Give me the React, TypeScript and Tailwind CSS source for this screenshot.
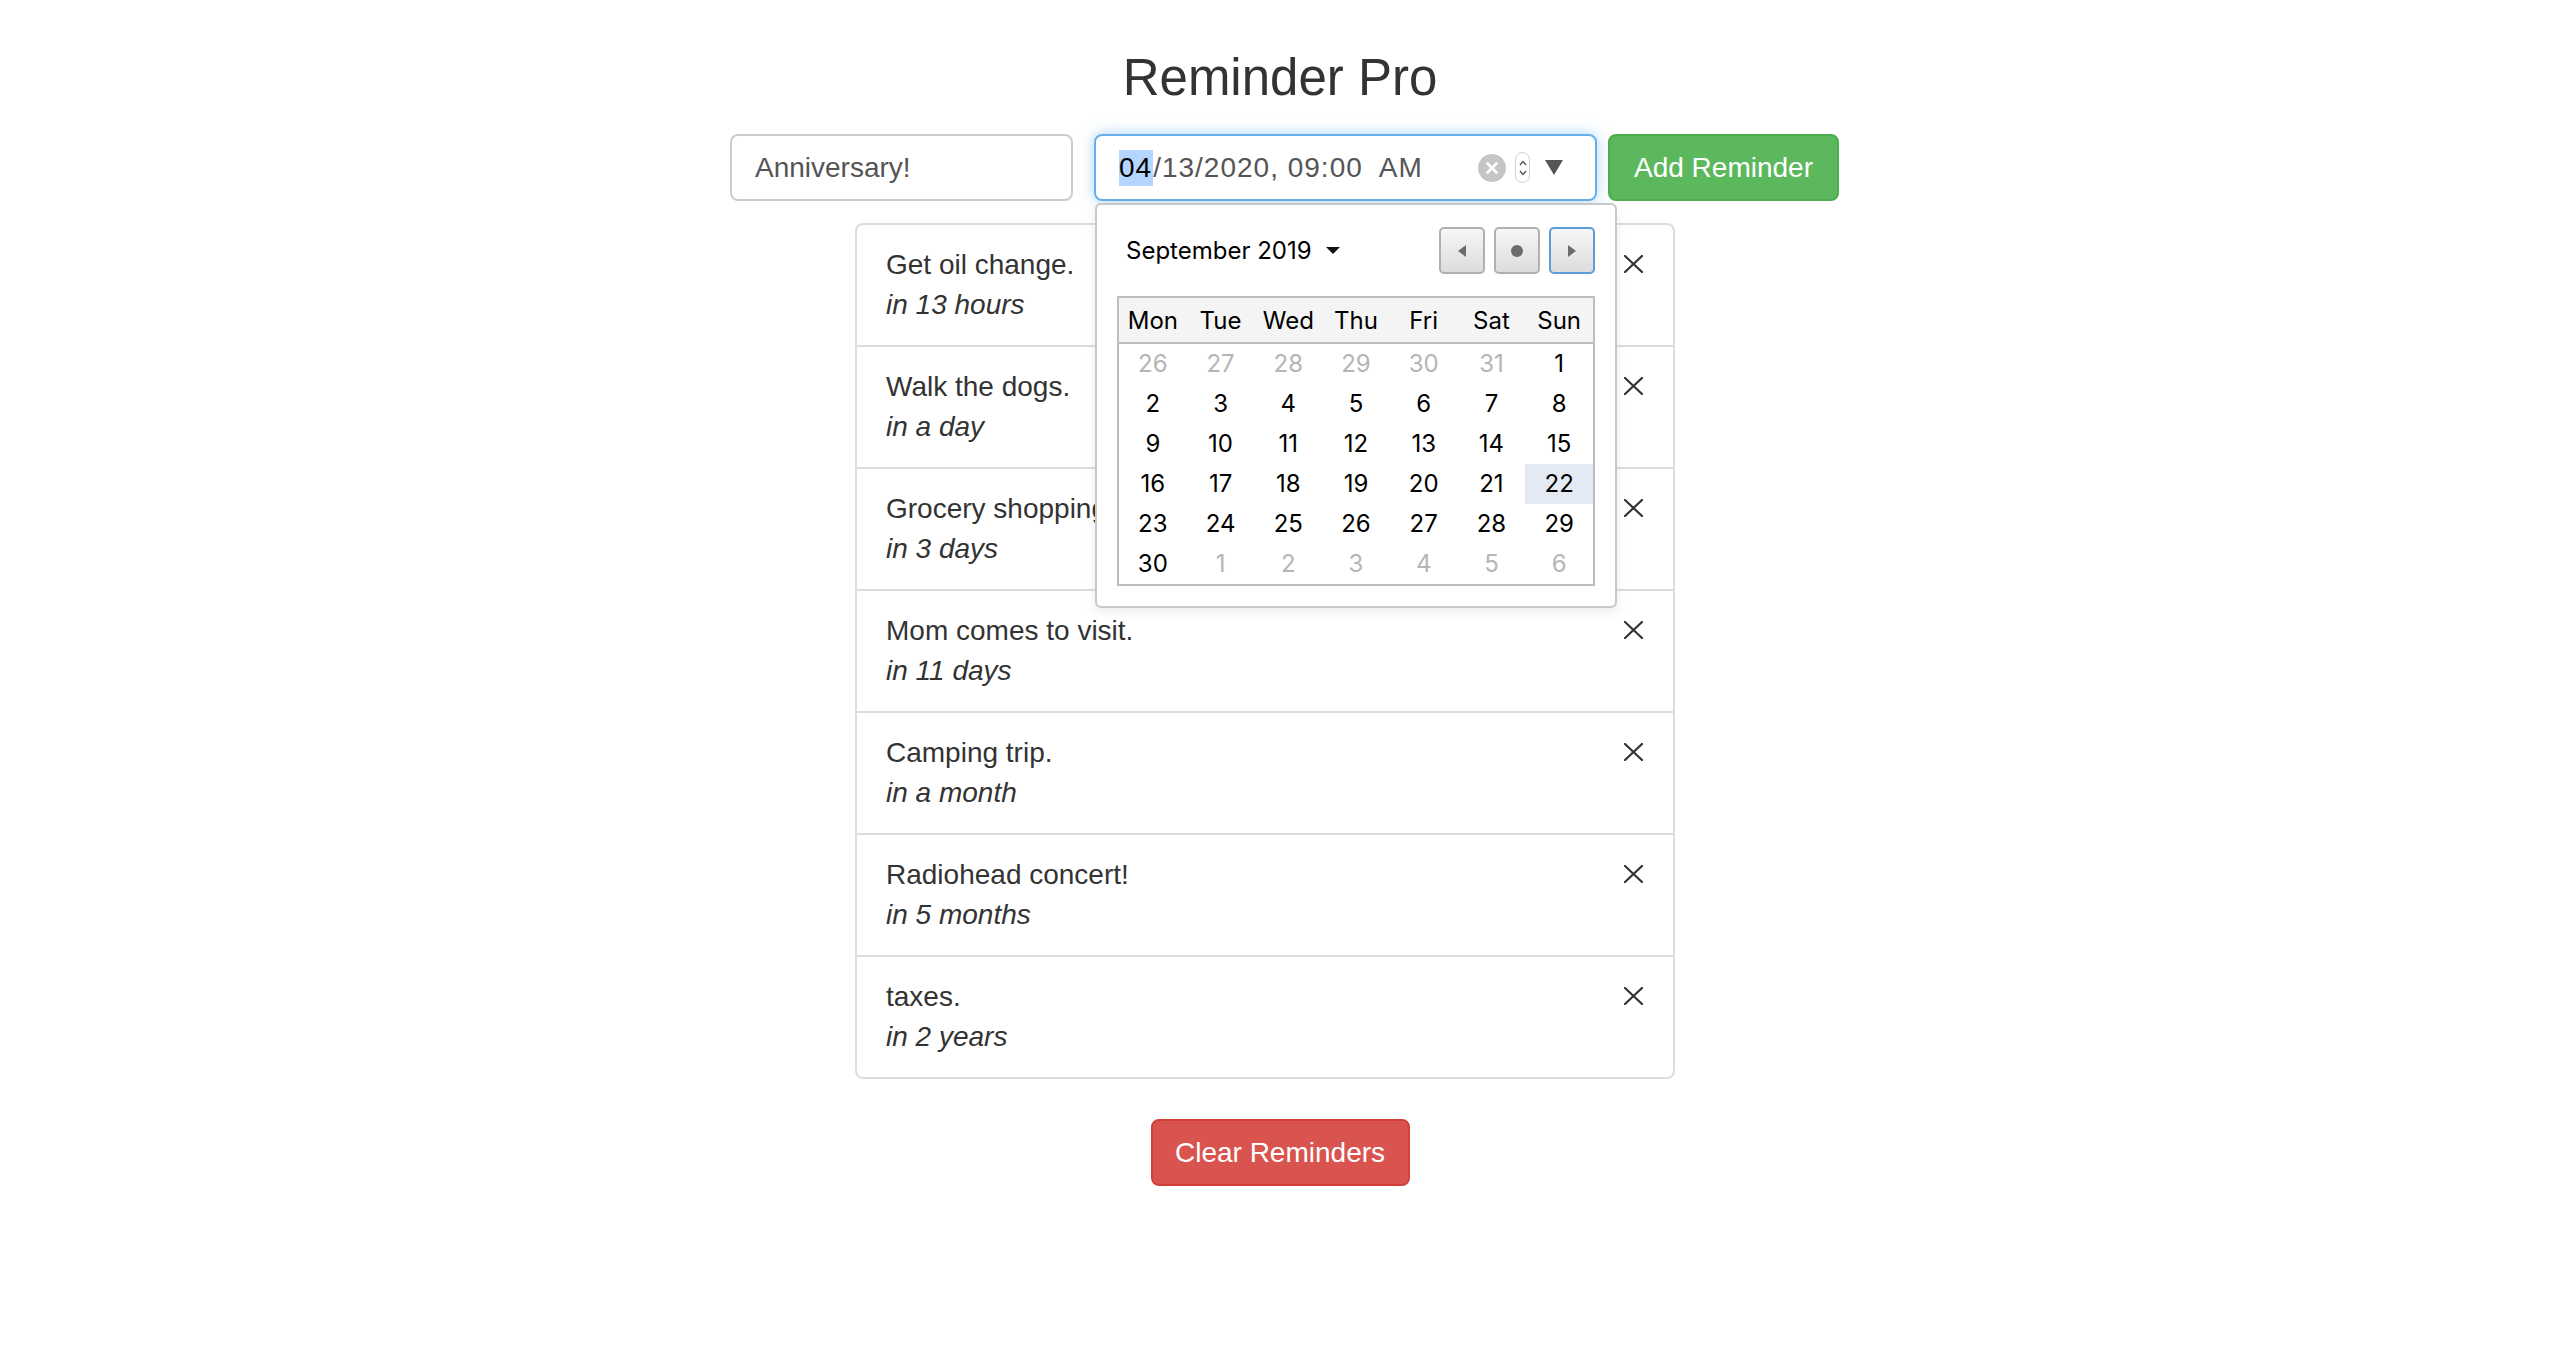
import { X } from "lucide-react";

const reminders = [
  { text: "Get oil change.", due: "in 13 hours" },
  { text: "Walk the dogs.", due: "in a day" },
  { text: "Grocery shopping.", due: "in 3 days" },
  { text: "Mom comes to visit.", due: "in 11 days" },
  { text: "Camping trip.", due: "in a month" },
  { text: "Radiohead concert!", due: "in 5 months" },
  { text: "taxes.", due: "in 2 years" },
];

const weekDays = ["Mon", "Tue", "Wed", "Thu", "Fri", "Sat", "Sun"];

// each cell: [label, isOutsideMonth]
const weeks: [number, boolean][][] = [
  [[26, true], [27, true], [28, true], [29, true], [30, true], [31, true], [1, false]],
  [[2, false], [3, false], [4, false], [5, false], [6, false], [7, false], [8, false]],
  [[9, false], [10, false], [11, false], [12, false], [13, false], [14, false], [15, false]],
  [[16, false], [17, false], [18, false], [19, false], [20, false], [21, false], [22, false]],
  [[23, false], [24, false], [25, false], [26, false], [27, false], [28, false], [29, false]],
  [[30, false], [1, true], [2, true], [3, true], [4, true], [5, true], [6, true]],
];

const CloseIcon = () => (
  <svg width="19" height="18" viewBox="0 0 19 18" className="mt-[10px] shrink-0">
    <path d="M1 1 L18 17 M18 1 L1 17" stroke="#333" strokeWidth="2.2" strokeLinecap="square" />
  </svg>
);

const NavButton = ({ kind, focused }: { kind: "prev" | "today" | "next"; focused?: boolean }) => (
  <div
    className={`flex h-[47px] w-[46px] items-center justify-center rounded-[5px] border-2 bg-gradient-to-b from-[#f7f7f7] to-[#dcdcdc] ${
      focused ? "border-[#5b9dd9]" : "border-[#b0b0b0]"
    }`}
  >
    {kind === "prev" && (
      <svg width="8" height="12" viewBox="0 0 8 12">
        <path d="M8 0 L0 6 L8 12 Z" fill="#6b6b6b" />
      </svg>
    )}
    {kind === "today" && <div className="h-[12px] w-[12px] rounded-full bg-[#6b6b6b]" />}
    {kind === "next" && (
      <svg width="8" height="12" viewBox="0 0 8 12">
        <path d="M0 0 L8 6 L0 12 Z" fill="#6b6b6b" />
      </svg>
    )}
  </div>
);

const DatePopup = () => (
  <div className="absolute left-[-1px] top-[calc(100%+4px)] z-10 w-[522px] rounded-[6px] border-2 border-[#c8c8c8] bg-white px-[20px] pb-[20px] pt-[22px] font-['Inter',sans-serif] text-black shadow-[0_4px_12px_rgba(0,0,0,0.08)]">
    <div className="flex h-[47px] items-center">
      <div className="ml-[9px] flex items-center text-[24px]">
        September 2019
        <svg width="14" height="7" viewBox="0 0 14 7" className="ml-[14px]">
          <path d="M0 0 L14 0 L7 7 Z" fill="#111" />
        </svg>
      </div>
      <div className="ml-auto flex gap-[9px]">
        <NavButton kind="prev" />
        <NavButton kind="today" />
        <NavButton kind="next" focused />
      </div>
    </div>
    <div className="mt-[22px] border-2 border-[#bdbdbd]">
      <div className="grid h-[46px] grid-cols-7 items-center border-b-2 border-[#bdbdbd] bg-[#f4f4f4] pt-[2px] text-center text-[24px]">
        {weekDays.map((d) => (
          <div key={d}>{d}</div>
        ))}
      </div>
      {weeks.map((week, wi) => (
        <div key={wi} className="grid h-[40px] grid-cols-7 text-center text-[24px]">
          {week.map(([n, out], di) => (
            <div
              key={di}
              className={`flex items-center justify-center ${out ? "text-[#b5b5b5]" : "text-black"} ${
                wi === 3 && di === 6 ? "bg-[#e4eaf4]" : ""
              }`}
            >
              {n}
            </div>
          ))}
        </div>
      ))}
    </div>
  </div>
);

export default function App() {
  return (
    <div className="min-h-screen bg-white font-['Liberation_Sans',Arial,sans-serif] text-[#333]">
      <div className="flex flex-col items-center">
        <h1 className="mt-[50px] text-[51px] font-normal leading-[56px]">Reminder Pro</h1>

        <div className="ml-[9px] mt-[28px] flex items-center">
          <div className="flex h-[67px] w-[343px] items-center rounded-[8px] border-2 border-[#ccc] px-[23px] text-[28px] text-[#555]">
            Anniversary!
          </div>

          <div className="relative ml-[21px] flex h-[67px] w-[503px] items-center rounded-[8px] border-2 border-[#66afe9] pl-[23px] pr-[32px] text-[28px] text-[#555] shadow-[0_0_14px_rgba(102,175,233,0.55)]">
            <span className="bg-[#b4d5fe] pr-[1px] leading-[36px] tracking-[1px] text-black">04</span>
            <span className="tracking-[1px]">/13/2020, 09:00&nbsp; AM</span>
            <div className="ml-auto flex items-center">
              <div className="flex h-[28px] w-[28px] items-center justify-center rounded-full bg-[#c6c6c6]">
                <X size={18} strokeWidth={3.5} color="#fff" />
              </div>
              <div className="ml-[9px] flex h-[31px] w-[15px] flex-col items-center justify-center gap-[4px] rounded-full border-[1.5px] border-[#cfcfcf]">
                <svg width="8" height="6" viewBox="0 0 8 6">
                  <path d="M1 5 L4 1.5 L7 5" stroke="#555" strokeWidth="1.4" fill="none" />
                </svg>
                <svg width="8" height="6" viewBox="0 0 8 6">
                  <path d="M1 1 L4 4.5 L7 1" stroke="#555" strokeWidth="1.4" fill="none" />
                </svg>
              </div>
              <svg width="18" height="15" viewBox="0 0 18 15" className="ml-[15px]">
                <path d="M0 0 L18 0 L9 15 Z" fill="#555" />
              </svg>
            </div>
            <DatePopup />
          </div>

          <button className="ml-[11px] h-[67px] w-[231px] rounded-[8px] border-2 border-[#4cae4c] bg-[#5cb85c] text-[28px] text-white">
            Add Reminder
          </button>
        </div>

        <ul className="mr-[30px] mt-[22px] w-[820px]">
          {reminders.map((r, i) => (
            <li
              key={i}
              className={`flex items-start justify-between border-2 border-[#ddd] pl-[29px] pr-[30px] py-[20px] text-[28px] leading-[40px] ${
                i > 0 ? "-mt-[2px]" : "rounded-t-[8px]"
              } ${i === reminders.length - 1 ? "rounded-b-[8px]" : ""}`}
            >
              <div>
                <div>{r.text}</div>
                <div className="italic">{r.due}</div>
              </div>
              <CloseIcon />
            </li>
          ))}
        </ul>

        <button className="mt-[40px] h-[67px] w-[259px] rounded-[8px] border-2 border-[#d43f3a] bg-[#d9534f] text-[28px] text-white">
          Clear Reminders
        </button>
      </div>
    </div>
  );
}
